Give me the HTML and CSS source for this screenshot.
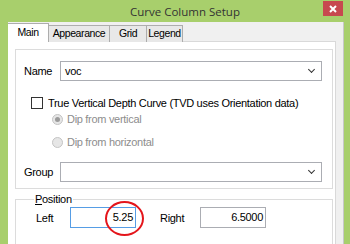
FILE: index.html
```html
<!DOCTYPE html>
<html lang="en">
<head>
<meta charset="UTF-8" />
<title>Curve Column Setup</title>
<link rel="stylesheet" href="styles.css">
</head>
<body>
  <div class="window">
    <div class="titlebar">
      <span class="title">Curve Column Setup</span>
      <button class="close" aria-label="Close">
        <svg width="8" height="8" viewBox="0 0 8 8"><path d="M1 1L7 7M7 1L1 7" stroke="#fff" stroke-width="2"/></svg>
      </button>
    </div>
    <div class="client">
      <div class="tabs">
        <div class="tab active">Main</div>
        <div class="tab tab-app">Appearance</div>
        <div class="tab tab-grid">Grid</div>
        <div class="tab tab-legend">Legend</div>
      </div>
      <div class="page">
        <div class="box">
          <div class="row">
            <label class="lbl">Name</label>
            <div class="combo"><span>voc</span><span class="arrow"></span></div>
          </div>
          <div class="check-row">
            <span class="checkbox"></span>
            <span>True Vertical Depth Curve (TVD uses Orientation data)</span>
          </div>
          <div class="radio-row">
            <span class="radio checked"></span>
            <span>Dip from vertical</span>
          </div>
          <div class="radio-row">
            <span class="radio"></span>
            <span>Dip from horizontal</span>
          </div>
          <div class="row group-row">
            <label class="lbl">Group</label>
            <div class="combo"><span></span><span class="arrow"></span></div>
          </div>
        </div>
        <fieldset class="position">
          <legend><u>P</u>osition</legend>
          <div class="pos-row">
            <label class="pos-lbl">Left</label>
            <div class="edit focused">5.25<span class="circle"></span></div>
            <label class="pos-lbl right-lbl">Right</label>
            <div class="edit">6.5000</div>
          </div>
        </fieldset>
      </div>
    </div>
  </div>
</body>
</html>
```

FILE: styles.css
```css
* {
  box-sizing: border-box;
}

body {
  margin: 0;
  width: 350px;
  height: 244px;
  overflow: hidden;
  background: #a8cf6c;
  font-family: 'Liberation Sans', Arial, sans-serif;
  font-size: 11px;
  letter-spacing: -0.3px;
  color: #000;
}

.window {
  padding: 0 6px 0 8px;
}

.titlebar {
  height: 22px;
  display: flex;
  align-items: center;
  justify-content: center;
  position: relative;
}

.title {
  font-family: 'Open Sans', sans-serif;
  font-size: 11.5px;
  letter-spacing: 0;
  color: #333;
  margin-left: 18px;
}

.close {
  position: absolute;
  right: 1px;
  top: 1px;
  width: 20px;
  height: 15px;
  border: none;
  padding: 0;
  background: #c7494f;
  display: flex;
  align-items: center;
  justify-content: center;
}

.client {
  background: #f0f0f0;
  height: 222px;
  padding: 2px 7px 0 0;
  border-right: 1px solid #c8c8c8;
}

.tabs {
  display: flex;
  height: 18px;
  align-items: flex-end;
  font-size: 10.5px;
  letter-spacing: -0.4px;
}

.tab {
  flex-shrink: 0;
  height: 17px;
  padding-top: 1px;
  text-align: center;
  background: #e8e8e8;
  border: 1px solid #adadad;
  border-bottom: none;
  margin-left: -1px;
}

.tab.active {
  width: 41px;
  height: 19px;
  background: #fff;
  margin-left: 0;
  padding-top: 2px;
  position: relative;
  z-index: 1;
  border-left: none;
}

.tab-app {
  width: 62px;
}

.tab-grid {
  width: 38px;
}

.tab-legend {
  width: 37px;
}

.page {
  background: #fff;
  border: 1px solid #d9d9d9;
  border-left: none;
  height: 210px;
  padding: 7px 2px 0 7px;
  margin-top: -1px;
}

.box {
  border: 1px solid #dcdcdc;
  height: 140px;
  padding: 11px 10px 0 8px;
}

.row {
  display: flex;
  align-items: center;
}

.lbl {
  width: 36px;
}

.combo {
  flex: 1;
  height: 20px;
  border: 1px solid #abadb3;
  display: flex;
  align-items: center;
  justify-content: space-between;
  padding: 0 4px;
}

.arrow {
  width: 5px;
  height: 5px;
  border-right: 1.5px solid #333;
  border-bottom: 1.5px solid #333;
  transform: rotate(45deg);
  margin: 0 3px 3px 0;
}

.check-row {
  display: flex;
  align-items: center;
  gap: 5px;
  margin: 16px 0 0 7px;
}

.checkbox {
  width: 12px;
  height: 12px;
  border: 1px solid #333;
  background: #fff;
}

.radio-row {
  display: flex;
  align-items: center;
  gap: 4px;
  margin: 4px 0 0 28px;
  color: #8d8d8d;
}

.radio-row + .radio-row {
  margin-top: 11px;
}

.radio {
  width: 11px;
  height: 11px;
  border-radius: 50%;
  border: 1px solid #c4c4c4;
  background: #e6e6e6;
  display: flex;
  align-items: center;
  justify-content: center;
}

.radio.checked::after {
  content: "";
  width: 5px;
  height: 5px;
  border-radius: 50%;
  background: #9a9a9a;
}

.group-row {
  margin-top: 14px;
}

.position {
  margin: 4px 0 0;
  padding: 2px 0 0 20px;
  border: 1px solid #dcdcdc;
  height: 60px;
}

.position legend {
  padding: 0 1px;
  margin-left: -2px;
}

.pos-row {
  display: flex;
  align-items: center;
}

.pos-lbl {
  width: 34px;
}

.right-lbl {
  width: 40px;
  margin-left: 24px;
}

.edit {
  width: 66px;
  height: 21px;
  border: 1px solid #abadb3;
  text-align: right;
  padding: 3px 2px 0 0;
  position: relative;
}

.edit.focused {
  border-color: #569de5;
}

.circle {
  position: absolute;
  left: 34px;
  top: -7px;
  width: 39px;
  height: 35px;
  border: 2px solid #e4151b;
  border-radius: 50%;
}
```
